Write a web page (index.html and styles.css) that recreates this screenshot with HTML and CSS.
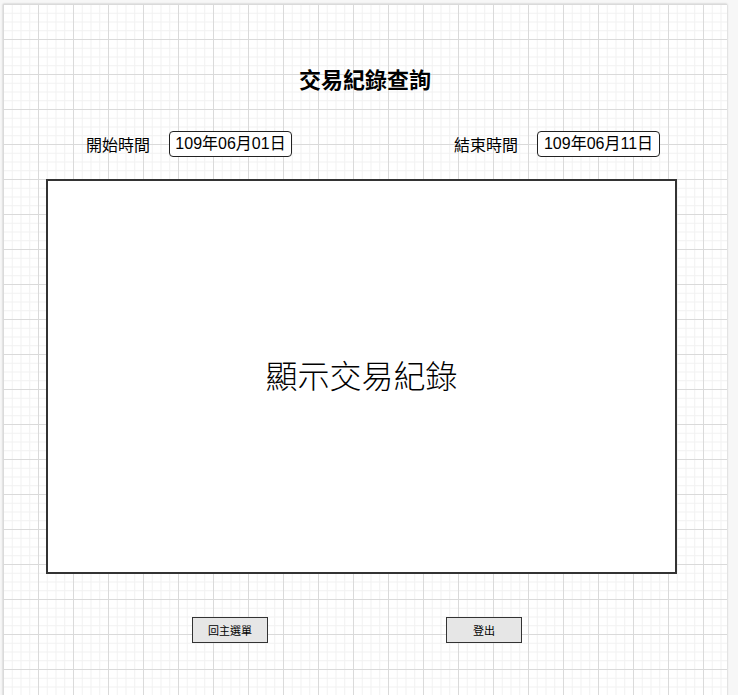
FILE: index.html
```html
<!DOCTYPE html>
<html lang="zh-Hant">
<head>
    <meta charset="UTF-8">
    <meta name="viewport" content="width=device-width, initial-scale=1.0">
    <title>交易紀錄查詢</title>
    <link rel="stylesheet" href="styles.css">
</head>
<body>
    <div class="canvas">
        <h2 class="title">交易紀錄查詢</h2>
        <div class="date-row">
            <div class="date-group">
                <span class="date-label">開始時間</span>
                <div class="date-box">109年06月01日</div>
            </div>
            <div class="date-group">
                <span class="date-label">結束時間</span>
                <div class="date-box">109年06月11日</div>
            </div>
        </div>
        <div class="records">顯示交易紀錄</div>
        <div class="actions">
            <button class="action-btn">回主選單</button>
            <button class="action-btn">登出</button>
        </div>
    </div>
</body>
</html>
```

FILE: styles.css
```css
html, body {
    margin: 0;
    padding: 0;
    height: 100%;
    overflow: hidden;
}
body {
    background: #f7f7f7;
    font-family: "Noto Sans CJK TC", "Noto Sans", sans-serif;
    color: #000;
}
.canvas {
    margin: 4px 0 0 3px;
    width: 724px;
    height: 720px;
    box-sizing: border-box;
    padding-top: 59px;
    background-color: #fff;
    background-image:
        linear-gradient(to right, #dadada 1px, transparent 1px),
        linear-gradient(to bottom, #dadada 1px, transparent 1px),
        linear-gradient(to right, #f1f1f1 1px, transparent 1px),
        linear-gradient(to bottom, #f1f1f1 1px, transparent 1px);
    background-size: 35px 35px, 35px 35px, 8.75px 8.75px, 8.75px 8.75px;
    box-shadow: 0 0 2px rgba(0, 0, 0, 0.25);
}
.title {
    margin: 0;
    height: 30px;
    line-height: 30px;
    text-align: center;
    font-size: 22px;
    font-weight: bold;
}
.date-row {
    display: flex;
    justify-content: space-between;
    margin: 38px 67px 0 83px;
    height: 26px;
}
.date-group {
    display: flex;
    align-items: center;
    gap: 19px;
}
.date-label {
    font-size: 16px;
}
.date-box {
    width: 123px;
    height: 26px;
    box-sizing: border-box;
    border: 1px solid #222;
    border-radius: 4px;
    background: #fff;
    font-family: "Liberation Sans", "Noto Sans CJK TC", sans-serif;
    font-size: 16px;
    line-height: 24px;
    text-align: center;
}
.records {
    margin: 22px 0 0 43px;
    width: 631px;
    height: 395px;
    box-sizing: border-box;
    padding-bottom: 6px;
    border: 2px solid #333;
    background: #fff;
    display: flex;
    align-items: center;
    justify-content: center;
    font-size: 32px;
    font-weight: 300;
}
.actions {
    display: flex;
    gap: 178px;
    margin: 43px 0 0 189px;
}
.action-btn {
    width: 76px;
    height: 26px;
    padding: 0;
    box-sizing: border-box;
    border: 1.5px solid #333;
    border-radius: 0;
    background: #e6e6e6;
    font-family: "Noto Sans CJK TC", sans-serif;
    font-size: 11px;
    color: #000;
}
```
